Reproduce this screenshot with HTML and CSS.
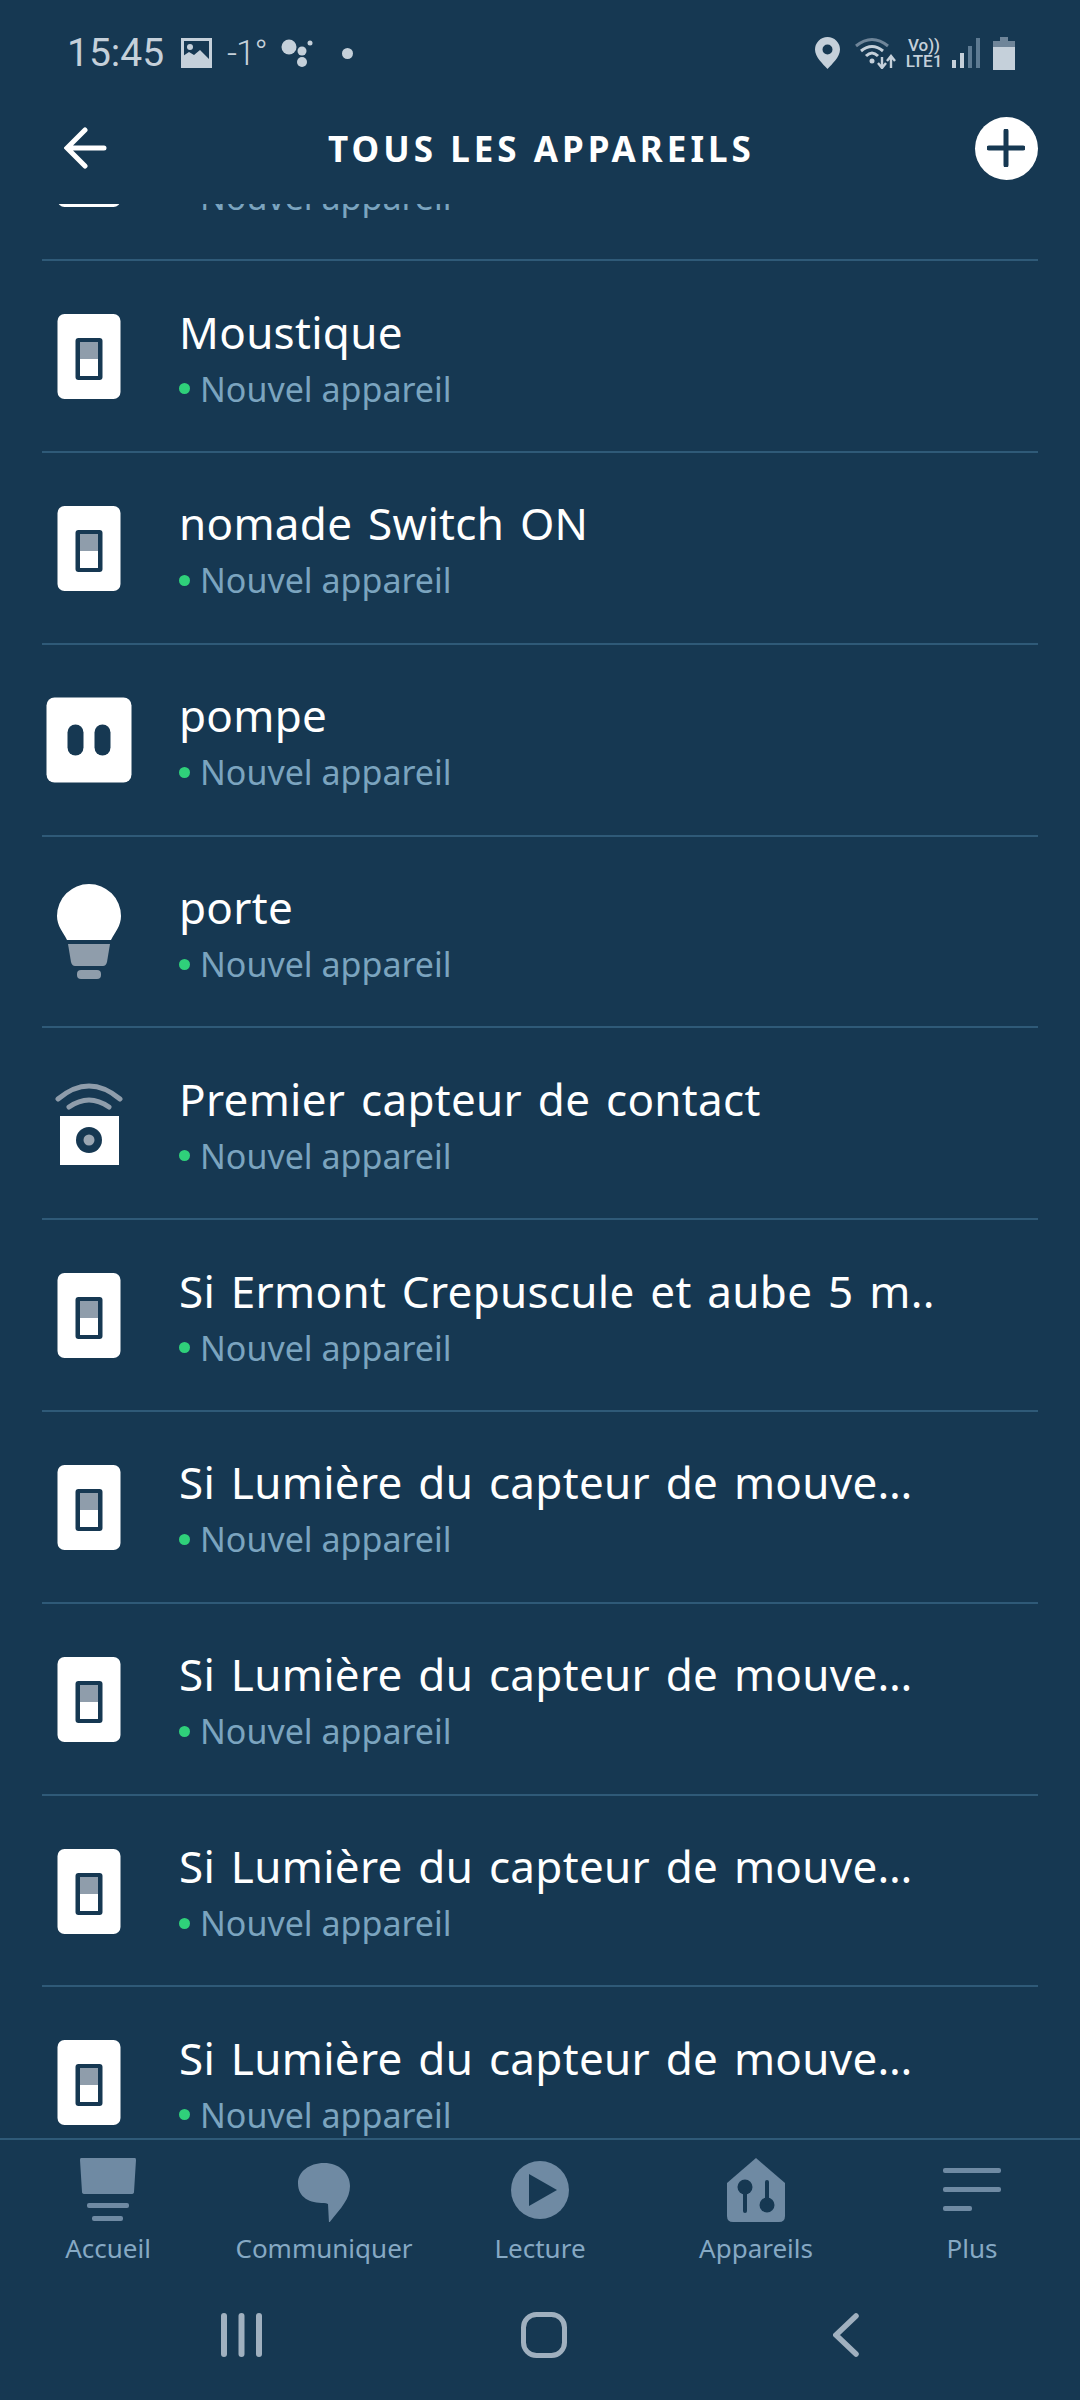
FILE: index.html
```html
<!DOCTYPE html>
<html lang="fr">

<head>
    <meta charset="UTF-8">
    <meta name="viewport" content="width=device-width, initial-scale=1.0">
    <title>Tous les appareils</title>
    <link rel="stylesheet" href="styles.css">
</head>

<body>
    <svg class="icon-defs">
        <symbol id="i-switch" viewBox="1 0 94 96">
            <rect x="16.5" y="6" width="63" height="85" rx="7" fill="#fff"/>
            <rect x="34.5" y="30" width="27" height="42" rx="3" fill="#163852"/>
            <rect x="39" y="34" width="18" height="17" fill="#8f9dab"/>
            <rect x="39" y="51" width="18" height="17" fill="#fff"/>
        </symbol>
        <symbol id="i-plug" viewBox="1 0 94 96">
            <rect x="5.5" y="5.5" width="85" height="85" rx="8" fill="#fff"/>
            <rect x="26.5" y="32.5" width="16" height="31" rx="8" fill="#163852"/>
            <rect x="53.5" y="32.5" width="16" height="31" rx="8" fill="#163852"/>
        </symbol>
        <symbol id="i-bulb" viewBox="1 0 94 96">
            <path d="M48 0a32 32 0 0 1 32 32c0 10-6 16-10 24H26c-4-8-10-14-10-24A32 32 0 0 1 48 0z" fill="#fff"/>
            <path d="M27 60h42l-3 18q-1 4-4 4H34q-3 0-4-4z" fill="#8f9dab"/>
            <rect x="36" y="86" width="24" height="9" rx="4" fill="#8f9dab"/>
        </symbol>
        <symbol id="i-sensor" viewBox="1 0 94 96">
            <path d="M17 24Q48-2 79 24" fill="none" stroke="#8f9dab" stroke-width="5" stroke-linecap="round"/>
            <path d="M28 32Q48 18 68 32" fill="none" stroke="#8f9dab" stroke-width="5" stroke-linecap="round"/>
            <rect x="19" y="41" width="59" height="49" fill="#fff"/>
            <circle cx="48" cy="65" r="13" fill="#163852"/>
            <circle cx="48" cy="65" r="5.5" fill="#9aa6b2"/>
        </symbol>
    </svg>

    <div class="phone">
        <div class="status-bar">
            <div class="status-left">
                <span class="clock">15:45</span>
                <svg class="st-img" width="31" height="30" viewBox="0 0 31 30">
                    <rect x="1.5" y="1.5" width="28" height="27" fill="none" stroke="#c5d0da" stroke-width="3"/>
                    <circle cx="9" cy="9" r="3" fill="#c5d0da"/>
                    <path d="M2 27v-9l6-4 5 3 6-5 10 10v5z" fill="#c5d0da"/>
                </svg>
                <span class="temp">-1°</span>
                <svg class="st-dots" width="32" height="28" viewBox="0 0 32 28">
                    <circle cx="8" cy="8" r="7.5" fill="#c5d0da"/>
                    <circle cx="21" cy="12" r="4.5" fill="#c5d0da"/>
                    <circle cx="21" cy="23" r="5" fill="#c5d0da"/>
                    <circle cx="29" cy="4" r="2.5" fill="#c5d0da"/>
                </svg>
                <span class="st-dot"></span>
            </div>
            <div class="status-right">
                <svg class="st-pin" width="25" height="32" viewBox="0 0 25 32">
                    <path d="M12.5 0A12.5 12.5 0 0 0 0 12.5C0 20 8 27 12.5 32 17 27 25 20 25 12.5A12.5 12.5 0 0 0 12.5 0zm0 17.5a5 5 0 1 1 0-10 5 5 0 0 1 0 10z" fill="#c5d0da"/>
                </svg>
                <svg class="st-wifi" width="41" height="32" viewBox="0 0 41 32">
                    <path d="M1 9Q17-4 33 9" fill="none" stroke="#6f8599" stroke-width="3"/>
                    <path d="M6 14Q17 5 28 14" fill="none" stroke="#c5d0da" stroke-width="3"/>
                    <path d="M11 19Q17 13 23 19" fill="none" stroke="#c5d0da" stroke-width="3"/>
                    <circle cx="17" cy="24" r="2.5" fill="#c5d0da"/>
                    <path d="M27 20v10M23 26l4 5 4-5M36 31V20M32 24l4-5 4 5" fill="none" stroke="#c5d0da" stroke-width="2.4"/>
                </svg>
                <div class="volte">
                    <span>Vo))</span>
                    <span>LTE1</span>
                </div>
                <svg class="st-signal" width="28" height="30" viewBox="0 0 28 30">
                    <rect x="0" y="22" width="4" height="8" fill="#c5d0da"/>
                    <rect x="8" y="15" width="4" height="15" fill="#c5d0da"/>
                    <rect x="16" y="8" width="4" height="22" fill="#5d7a92"/>
                    <rect x="24" y="0" width="4" height="30" fill="#5d7a92"/>
                </svg>
                <svg width="22" height="33" viewBox="0 0 22 33">
                    <path d="M7 0h8v4h7v6H0V4h7z" fill="#6f8599"/>
                    <rect y="10" width="22" height="23" fill="#c5d0da"/>
                </svg>
            </div>
        </div>

        <header class="top-bar">
            <svg class="back" width="44" height="42" viewBox="0 0 44 42">
                <path d="M40 21H4M21 3 3 21l18 18" fill="none" stroke="#fff" stroke-width="5" stroke-linecap="round"/>
            </svg>
            <h1 class="page-title">TOUS LES APPAREILS</h1>
            <button class="add-btn">
                <svg width="38" height="38" viewBox="0 0 38 38">
                    <path d="M19 2v34M2 19h34" fill="none" stroke="#163852" stroke-width="5" stroke-linecap="round"/>
                </svg>
            </button>
        </header>

        <main class="device-list">
            <div class="list-inner">
                <div class="device">
                    <svg class="device-icon"><use href="#i-switch"/></svg>
                    <div class="device-text">
                        <div class="device-name"></div>
                        <div class="device-sub"><span class="dot"></span>Nouvel appareil</div>
                    </div>
                </div>
                <div class="device">
                    <svg class="device-icon"><use href="#i-switch"/></svg>
                    <div class="device-text">
                        <div class="device-name">Moustique</div>
                        <div class="device-sub"><span class="dot"></span>Nouvel appareil</div>
                    </div>
                </div>
                <div class="device">
                    <svg class="device-icon"><use href="#i-switch"/></svg>
                    <div class="device-text">
                        <div class="device-name">nomade Switch ON</div>
                        <div class="device-sub"><span class="dot"></span>Nouvel appareil</div>
                    </div>
                </div>
                <div class="device">
                    <svg class="device-icon"><use href="#i-plug"/></svg>
                    <div class="device-text">
                        <div class="device-name">pompe</div>
                        <div class="device-sub"><span class="dot"></span>Nouvel appareil</div>
                    </div>
                </div>
                <div class="device">
                    <svg class="device-icon"><use href="#i-bulb"/></svg>
                    <div class="device-text">
                        <div class="device-name">porte</div>
                        <div class="device-sub"><span class="dot"></span>Nouvel appareil</div>
                    </div>
                </div>
                <div class="device">
                    <svg class="device-icon"><use href="#i-sensor"/></svg>
                    <div class="device-text">
                        <div class="device-name">Premier capteur de contact</div>
                        <div class="device-sub"><span class="dot"></span>Nouvel appareil</div>
                    </div>
                </div>
                <div class="device">
                    <svg class="device-icon"><use href="#i-switch"/></svg>
                    <div class="device-text">
                        <div class="device-name">Si Ermont Crepuscule et aube 5 m..</div>
                        <div class="device-sub"><span class="dot"></span>Nouvel appareil</div>
                    </div>
                </div>
                <div class="device">
                    <svg class="device-icon"><use href="#i-switch"/></svg>
                    <div class="device-text">
                        <div class="device-name">Si Lumière du capteur de mouve…</div>
                        <div class="device-sub"><span class="dot"></span>Nouvel appareil</div>
                    </div>
                </div>
                <div class="device">
                    <svg class="device-icon"><use href="#i-switch"/></svg>
                    <div class="device-text">
                        <div class="device-name">Si Lumière du capteur de mouve…</div>
                        <div class="device-sub"><span class="dot"></span>Nouvel appareil</div>
                    </div>
                </div>
                <div class="device">
                    <svg class="device-icon"><use href="#i-switch"/></svg>
                    <div class="device-text">
                        <div class="device-name">Si Lumière du capteur de mouve…</div>
                        <div class="device-sub"><span class="dot"></span>Nouvel appareil</div>
                    </div>
                </div>
                <div class="device">
                    <svg class="device-icon"><use href="#i-switch"/></svg>
                    <div class="device-text">
                        <div class="device-name">Si Lumière du capteur de mouve…</div>
                        <div class="device-sub"><span class="dot"></span>Nouvel appareil</div>
                    </div>
                </div>
            </div>
        </main>

        <nav class="tab-bar">
            <a class="tab">
                <svg width="58" height="64" viewBox="0 0 58 64">
                    <path d="M2 0h54q1 0 1 2l-2 32q0 2-3 2H6q-3 0-3-2L1 2q0-2 1-2z" fill="#6f8aa3"/>
                    <rect x="8" y="45" width="42" height="5" rx="2" fill="#6f8aa3"/>
                    <rect x="13" y="58" width="31" height="5" rx="2" fill="#6f8aa3"/>
                </svg>
                <span>Accueil</span>
            </a>
            <a class="tab">
                <svg width="58" height="64" viewBox="0 0 58 64">
                    <path d="M29 5c15 0 26 10 26 23 0 13-9 22-21 37l-1-19q-2-1-4-1C15 45 3 40 3 25 3 14 14 5 29 5z" fill="#6f8aa3"/>
                </svg>
                <span>Communiquer</span>
            </a>
            <a class="tab">
                <svg width="58" height="64" viewBox="0 0 58 64">
                    <circle cx="29" cy="32" r="29" fill="#6f8aa3"/>
                    <path d="M18 16v32l28-16z" fill="#163852"/>
                </svg>
                <span>Lecture</span>
            </a>
            <a class="tab">
                <svg width="58" height="64" viewBox="0 0 58 64">
                    <path d="M29 0 58 25v33q0 6-6 6H6q-6 0-6-6V25z" fill="#6f8aa3"/>
                    <circle cx="18" cy="29" r="7.5" fill="#163852"/>
                    <rect x="16" y="30" width="4" height="25" rx="2" fill="#163852"/>
                    <circle cx="40" cy="47" r="7.5" fill="#163852"/>
                    <rect x="38" y="22" width="4" height="25" rx="2" fill="#163852"/>
                </svg>
                <span>Appareils</span>
            </a>
            <a class="tab">
                <svg width="58" height="64" viewBox="0 0 58 64">
                    <rect y="10" width="58" height="5" rx="2" fill="#6f8aa3"/>
                    <rect y="29" width="58" height="5" rx="2" fill="#6f8aa3"/>
                    <rect y="48" width="29" height="5" rx="2" fill="#6f8aa3"/>
                </svg>
                <span>Plus</span>
            </a>
        </nav>

        <div class="system-nav">
            <svg width="41" height="44" viewBox="0 0 41 44">
                <rect x="0" width="6" height="44" rx="3" fill="#a0b0bf"/>
                <rect x="17.5" width="6" height="44" rx="3" fill="#a0b0bf"/>
                <rect x="35" width="6" height="44" rx="3" fill="#a0b0bf"/>
            </svg>
            <svg width="46" height="46" viewBox="0 0 46 46">
                <rect x="2.5" y="2.5" width="41" height="41" rx="13" fill="none" stroke="#a0b0bf" stroke-width="5"/>
            </svg>
            <svg class="sys-back" width="26" height="44" viewBox="0 0 26 44">
                <path d="M23 3 3 22l20 19" fill="none" stroke="#a0b0bf" stroke-width="5.5" stroke-linecap="round"/>
            </svg>
        </div>
    </div>
</body>

</html>
```

FILE: styles.css
```css
/* Reset */
* {
    margin: 0;
    padding: 0;
    box-sizing: border-box;
}

body {
    font-family: 'Noto Sans', sans-serif;
    background-color: #163852;
    color: white;
}

.icon-defs {
    display: none;
}

.phone {
    width: 1080px;
    height: 2400px;
    display: flex;
    flex-direction: column;
    overflow: hidden;
}

/* Status bar */
.status-bar {
    height: 96px;
    padding: 10px 65px 0 67px;
    display: flex;
    justify-content: space-between;
    align-items: center;
    color: #c5d0da;
    font-family: Roboto, sans-serif;
}

.status-left,
.status-right {
    display: flex;
    align-items: center;
}

.clock {
    font-size: 39px;
    width: 114px;
}

.st-img {
    margin-right: 15px;
}

.temp {
    font-size: 35px;
    font-weight: 300;
    letter-spacing: -1px;
    width: 54px;
}

.st-dot {
    width: 11px;
    height: 11px;
    border-radius: 50%;
    background: #c5d0da;
    margin-left: 29px;
}

.status-right {
    gap: 10px;
}

.st-pin {
    margin-right: 5px;
}

.volte {
    width: 38px;
    display: flex;
    flex-direction: column;
    align-items: center;
    font-size: 17px;
    line-height: 16px;
    font-weight: 500;
}

.st-wifi {
    margin-right: -1px;
}

.st-signal {
    margin-left: -1px;
    margin-right: 3px;
}

/* Top bar */
.top-bar {
    height: 108px;
    padding: 0 42px 4px 64px;
    display: flex;
    justify-content: space-between;
    align-items: center;
}

.page-title {
    font-size: 35px;
    font-weight: 700;
    letter-spacing: 4px;
}

.add-btn {
    width: 63px;
    height: 63px;
    border: none;
    border-radius: 50%;
    background: white;
    display: flex;
    justify-content: center;
    align-items: center;
}

/* Device list */
.device-list {
    height: 1936px;
    overflow: hidden;
    border-bottom: 2px solid #2f5a78;
}

.list-inner {
    margin: -134.5px 42px 0;
}

.device {
    height: 191.8px;
    display: flex;
    align-items: center;
    gap: 43px;
    border-bottom: 2px solid #2f5a78;
}

.device-icon {
    width: 94px;
    height: 96px;
    flex-shrink: 0;
}

.device-text {
    padding-top: 6px;
}

.device-name {
    min-height: 52px;
    font-size: 44px;
    line-height: 52px;
    letter-spacing: 0.3px;
    word-spacing: 4px;
    white-space: nowrap;
}

.device-sub {
    display: flex;
    align-items: center;
    gap: 10px;
    margin-top: 7px;
    font-size: 34px;
    line-height: 48px;
    color: #7ba4bf;
}

.dot {
    width: 11px;
    height: 11px;
    border-radius: 50%;
    background: #2fd07a;
}

/* Bottom tabs */
.tab-bar {
    height: 144px;
    display: flex;
}

.tab {
    flex: 1;
    padding-top: 18px;
    display: flex;
    flex-direction: column;
    align-items: center;
    font-size: 26px;
    line-height: 36px;
    color: #86a9c4;
}

.tab svg {
    margin-bottom: 8px;
}

/* Android nav buttons */
.system-nav {
    padding: 28px 221px 0;
    display: flex;
    align-items: center;
    gap: 259px;
}

.sys-back {
    margin-left: 7px;
}
```
